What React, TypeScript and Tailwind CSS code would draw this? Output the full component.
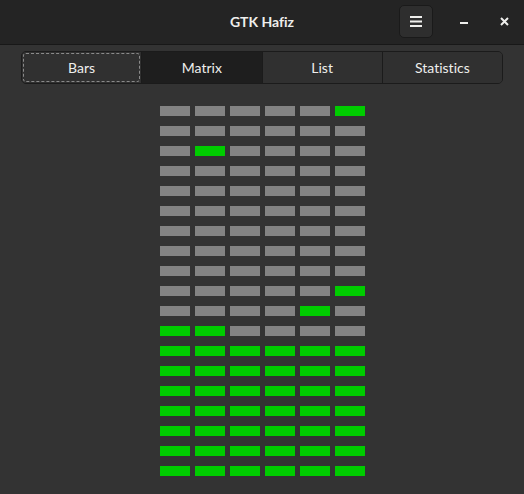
import React from "react";

// one string per row, "1" = lit cell
const rows = [
  "000001",
  "000000",
  "010000",
  "000000",
  "000000",
  "000000",
  "000000",
  "000000",
  "000000",
  "000001",
  "000010",
  "110000",
  "111111",
  "111111",
  "111111",
  "111111",
  "111111",
  "111111",
  "111111",
];

const tabs = ["Bars", "Matrix", "List", "Statistics"];

const App = () => {
  return (
    <div
      className="w-[524px] h-[494px] bg-[#333333] text-[#eeeeec] overflow-hidden [font-variant-ligatures:none]"
      style={{ fontFamily: 'Lato, "Noto Sans", sans-serif' }}
    >
      <div className="h-[45px] bg-[#242424] border-b border-[#181818] flex items-center relative">
        <div className="flex-1 text-center font-bold text-[14px] pb-[2px]">GTK Hafiz</div>
        <div className="absolute right-0 top-0 h-[42px] flex items-center">
          <button className="w-[34px] h-[33px] rounded-[5px] bg-[#2e2e2e] border border-[#1a1a1a] flex items-center justify-center">
            <svg width="12" height="11" viewBox="0 0 12 11">
              <rect x="0" y="0" width="12" height="2" fill="#eeeeec" />
              <rect x="0" y="4.5" width="12" height="2" fill="#eeeeec" />
              <rect x="0" y="9" width="12" height="2" fill="#eeeeec" />
            </svg>
          </button>
          <div className="w-[62px] flex items-center justify-center pt-[4px]">
            <div className="w-[8px] h-[2px] bg-[#eeeeec]" />
          </div>
          <div className="w-[18px] mr-[11px] flex items-center justify-center">
            <svg width="9" height="9" viewBox="0 0 9 9">
              <path d="M1 1 L8 8 M8 1 L1 8" stroke="#eeeeec" strokeWidth="2" />
            </svg>
          </div>
        </div>
      </div>

      <div className="px-[21px] pt-[6px]">
        <div className="flex h-[33px] rounded-[5px] border border-[#1b1b1b] overflow-hidden bg-[#2f2f2f]">
          {tabs.map((t, i) => (
            <div
              key={t}
              className={`flex-1 flex items-center justify-center text-[14px] ${
                i > 0 ? "border-l border-[#1b1b1b]" : ""
              } ${i === 1 ? "bg-[#1e1e1e]" : "bg-[#303030]"}`}
            >
              {i === 0 ? (
                <div className="m-[1px] w-full h-[29px] border border-dashed border-[#8a8a8a] rounded-[3px] flex items-center justify-center">
                  {t}
                </div>
              ) : (
                t
              )}
            </div>
          ))}
        </div>
      </div>

      <div className="flex flex-col gap-[10px] items-center mt-[22px]">
        {rows.map((r, ri) => (
          <div key={ri} className="flex gap-[5px]">
            {r.split("").map((c, ci) => (
              <div
                key={ci}
                className={`w-[30px] h-[10px] ${c === "1" ? "bg-[#00cc00]" : "bg-[#838383]"}`}
              />
            ))}
          </div>
        ))}
      </div>
    </div>
  );
};

export default App;
